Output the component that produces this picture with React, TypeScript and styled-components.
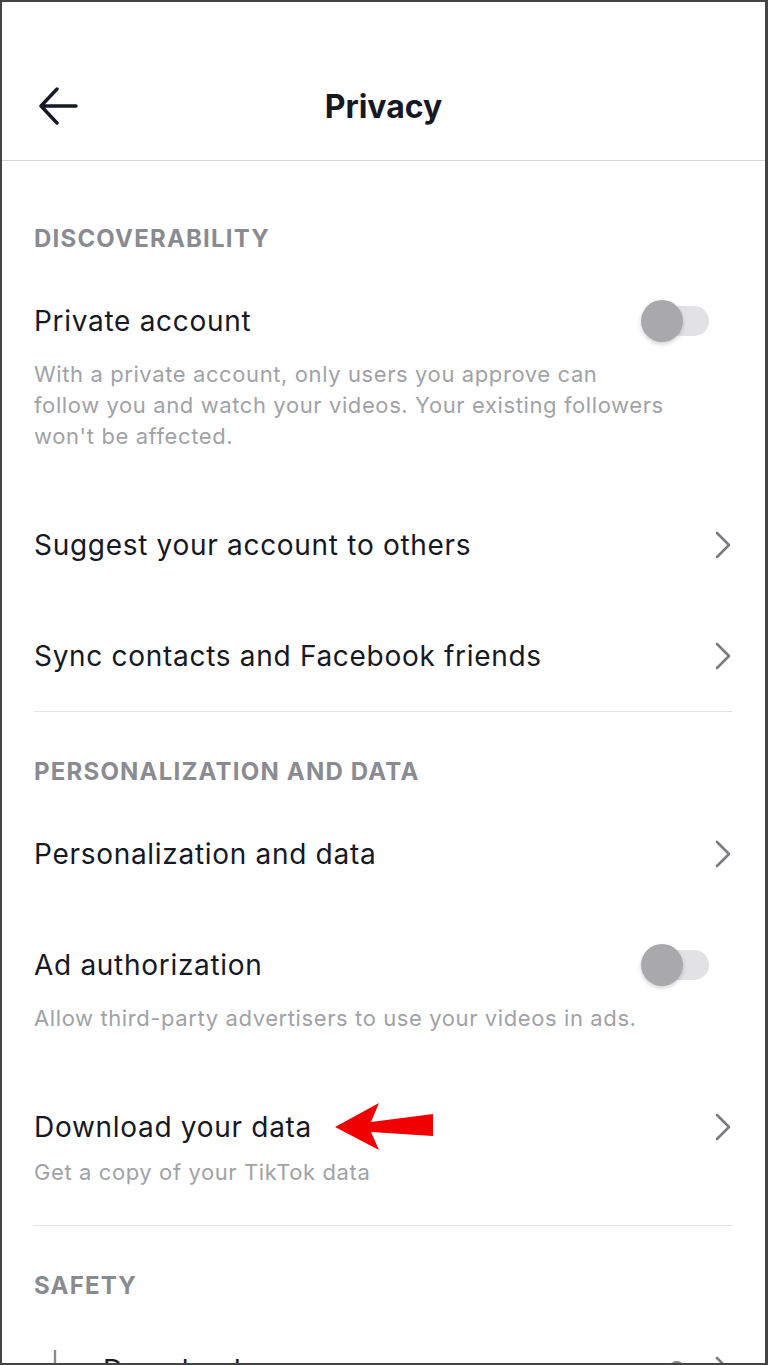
import React from "react";
import styled, { createGlobalStyle } from "styled-components";

const GlobalStyle = createGlobalStyle`
  html, body {
    margin: 0;
    padding: 0;
    background: #ffffff;
  }
  body {
    font-family: Inter, "Noto Sans", "Liberation Sans", sans-serif;
    color: #161823;
  }
`;

const Screen = styled.div`
  width: 768px;
  height: 1365px;
  box-sizing: border-box;
  border: 2px solid #444;
  border-right-width: 3px;
  overflow: hidden;
  background: #fff;
`;

const Header = styled.header`
  height: 108px;
  padding-top: 50px;
  border-bottom: 1px solid #d4d4d4;
  display: flex;
  align-items: center;
`;

const BackButton = styled.button`
  border: 0;
  background: none;
  padding: 0;
  margin-left: 36px;
  width: 40px;
  height: 40px;
  display: flex;
  align-items: center;
  justify-content: center;
`;

const Title = styled.h1`
  flex: 1;
  margin: 0 76px 0 0;
  text-align: center;
  font-size: 32px;
  font-weight: 700;
`;

const Content = styled.main`
  padding: 0 33px 0 32px;
`;

const SectionTitle = styled.h2<{ $first?: boolean }>`
  margin: 0;
  padding: ${(p) => (p.$first ? "63px" : "45px")} 0 11px;
  font-size: 24px;
  line-height: 30px;
  font-weight: 700;
  letter-spacing: 1.2px;
  color: #8a8b91;
  text-transform: uppercase;
`;

const Item = styled.div`
  padding: 38px 0 37px;
`;

const ItemRow = styled.div`
  display: flex;
  align-items: center;
  justify-content: space-between;
  gap: 16px;
`;

const ItemLabel = styled.div`
  display: flex;
  align-items: center;
  gap: 16px;
  font-size: 28px;
  line-height: 36px;
  letter-spacing: 0.7px;
  color: #161823;
`;

const Description = styled.p<{ $gap?: number }>`
  margin: ${(p) => p.$gap ?? 20}px 0 0;
  font-size: 22px;
  line-height: 31px;
  letter-spacing: 0.6px;
  color: #a1a2a7;
`;

const Divider = styled.hr`
  margin: 0;
  border: 0;
  border-top: 1px solid #e4e4e6;
`;

const Trailing = styled.div`
  display: flex;
  align-items: center;
  gap: 14px;
  color: #8a8b91;
  font-size: 24px;
`;

const Track = styled.div`
  position: relative;
  width: 66px;
  height: 30px;
  margin-right: 23px;
  border-radius: 15px;
  background: #e2e2e4;
`;

const Knob = styled.div`
  position: absolute;
  left: -2px;
  top: -6px;
  width: 42px;
  height: 42px;
  border-radius: 50%;
  background: #a9a9ab;
  box-shadow: 0 2px 4px rgba(0, 0, 0, 0.18);
`;

const IconSlot = styled.span`
  width: 53px;
  display: flex;
  align-items: center;
`;

const ArrowMark = styled.svg`
  margin: -8px 0 -8px 6px;
  flex-shrink: 0;
`;

const Chevron = () => (
  <svg width="18" height="28" viewBox="0 0 18 28" fill="none">
    <polyline
      points="3,2 15,14 3,26"
      stroke="#7a7b80"
      strokeWidth="2.6"
      strokeLinecap="round"
      strokeLinejoin="round"
    />
  </svg>
);

const Toggle = () => (
  <Track>
    <Knob />
  </Track>
);

const RedArrow = () => (
  <ArrowMark width="100" height="50" viewBox="0 0 100 50">
    <polygon
      points="1,25 45,1 37,20 99,12 99,34 37,30 45,48"
      fill="#f00000"
    />
  </ArrowMark>
);

const BackArrow = () => (
  <svg width="40" height="38" viewBox="0 0 40 38" fill="none">
    <path
      d="M38 19H4M19 2L3 19l16 17"
      stroke="#161823"
      strokeWidth="3.4"
      strokeLinecap="round"
      strokeLinejoin="round"
    />
  </svg>
);

const DownloadIcon = () => (
  <svg width="36" height="40" viewBox="0 0 36 40" fill="none">
    <path d="M21 0v28M11 19l10 10 10-10M7 37h28" stroke="#8a8b91" strokeWidth="2.4" />
  </svg>
);

interface RowProps {
  label: React.ReactNode;
  description?: React.ReactNode;
  descGap?: number;
  trailing?: React.ReactNode;
}

const SettingItem: React.FC<RowProps> = ({ label, description, descGap, trailing }) => (
  <Item>
    <ItemRow>
      <ItemLabel>{label}</ItemLabel>
      <Trailing>{trailing}</Trailing>
    </ItemRow>
    {description && <Description $gap={descGap}>{description}</Description>}
  </Item>
);

export default function App() {
  return (
    <>
      <GlobalStyle />
      <Screen>
        <Header>
          <BackButton aria-label="Back">
            <BackArrow />
          </BackButton>
          <Title>Privacy</Title>
        </Header>
        <Content>
          <SectionTitle $first>Discoverability</SectionTitle>
          <SettingItem
            label="Private account"
            description={
              <>
                With a private account, only users you approve can
                <br />
                follow you and watch your videos. Your existing followers
                <br />
                won't be affected.
              </>
            }
            trailing={<Toggle />}
          />
          <SettingItem label="Suggest your account to others" trailing={<Chevron />} />
          <SettingItem label="Sync contacts and Facebook friends" trailing={<Chevron />} />
          <Divider />

          <SectionTitle>Personalization and data</SectionTitle>
          <SettingItem label="Personalization and data" trailing={<Chevron />} />
          <SettingItem
            label="Ad authorization"
            description="Allow third-party advertisers to use your videos in ads."
            trailing={<Toggle />}
          />
          <SettingItem
            label={
              <>
                <span>Download your data</span>
                <RedArrow />
              </>
            }
            description="Get a copy of your TikTok data"
            descGap={12}
            trailing={<Chevron />}
          />
          <Divider />

          <SectionTitle>Safety</SectionTitle>
          <SettingItem
            label={
              <>
                <IconSlot>
                  <DownloadIcon />
                </IconSlot>
                <span>Downloads</span>
              </>
            }
            trailing={
              <>
                <span>On</span>
                <Chevron />
              </>
            }
          />
        </Content>
      </Screen>
    </>
  );
}
